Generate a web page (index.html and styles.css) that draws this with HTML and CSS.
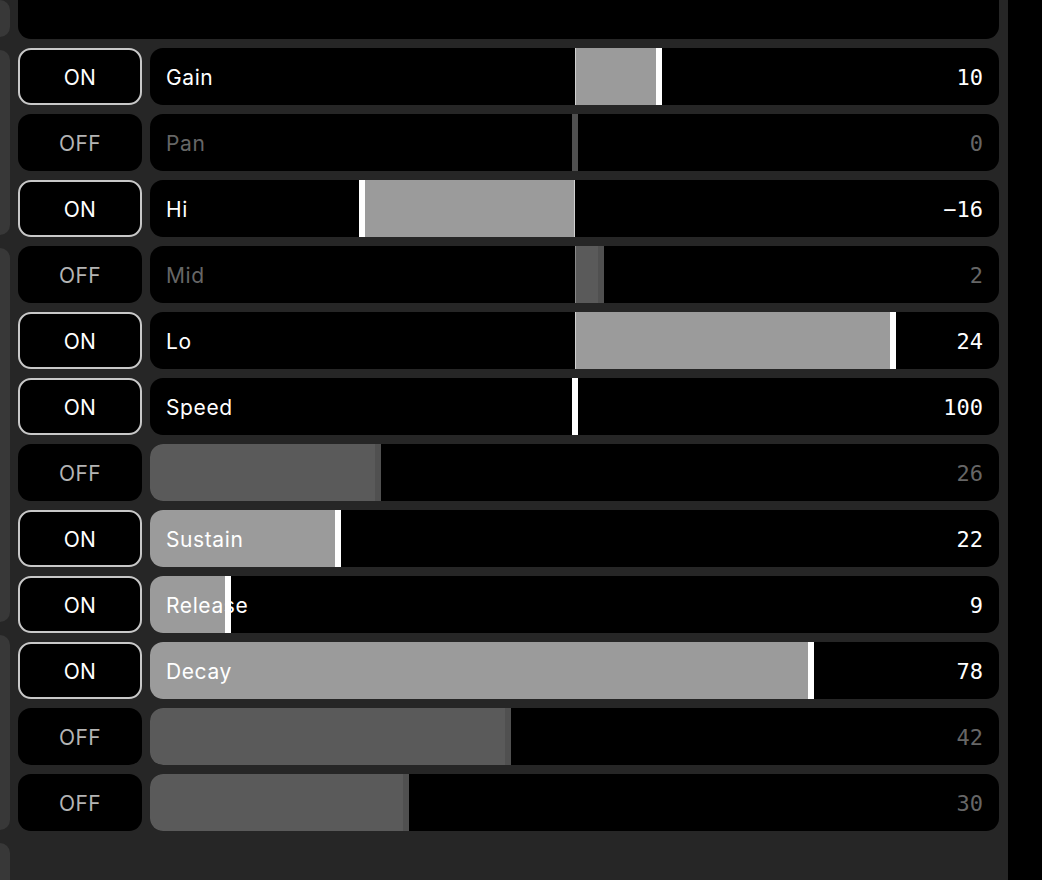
FILE: index.html
```html
<html>

<head>
    <link rel="stylesheet" href="styles.css">
</head>

<body>
    <div class="app">
        <div class="side">
            <div class="card c1"></div>
            <div class="card c2"></div>
            <div class="card c3"></div>
            <div class="card c4"></div>
            <div class="card c5"></div>
        </div>

        <div class="main">
            <div class="top"></div>

            <div class="row">
                <button class="toggle on">ON</button>
                <div class="track">
                    <div class="fill pos" style="left: 50%; width: 10%"></div>
                    <span class="label">Gain</span>
                    <span class="value">10</span>
                    <div class="knob" style="left: calc(60% - 3px)"></div>
                </div>
            </div>

            <div class="row">
                <button class="toggle">OFF</button>
                <div class="track off">
                    <span class="label">Pan</span>
                    <span class="value">0</span>
                    <div class="knob" style="left: calc(50% - 3px)"></div>
                </div>
            </div>

            <div class="row">
                <button class="toggle on">ON</button>
                <div class="track">
                    <div class="fill neg" style="left: 25%; width: 25%"></div>
                    <span class="label">Hi</span>
                    <span class="value">−16</span>
                    <div class="knob" style="left: calc(25% - 3px)"></div>
                </div>
            </div>

            <div class="row">
                <button class="toggle">OFF</button>
                <div class="track off">
                    <div class="fill pos" style="left: 50%; width: 3.125%"></div>
                    <span class="label">Mid</span>
                    <span class="value">2</span>
                    <div class="knob" style="left: calc(53.125% - 3px)"></div>
                </div>
            </div>

            <div class="row">
                <button class="toggle on">ON</button>
                <div class="track">
                    <div class="fill pos" style="left: 50%; width: 37.5%"></div>
                    <span class="label">Lo</span>
                    <span class="value">24</span>
                    <div class="knob" style="left: calc(87.5% - 3px)"></div>
                </div>
            </div>

            <div class="row">
                <button class="toggle on">ON</button>
                <div class="track">
                    <span class="label">Speed</span>
                    <span class="value">100</span>
                    <div class="knob" style="left: calc(50% - 3px)"></div>
                </div>
            </div>

            <div class="row">
                <button class="toggle">OFF</button>
                <div class="track off">
                    <div class="fill" style="left: 0; width: 27.2%"></div>
                    <span class="label"></span>
                    <span class="value">26</span>
                    <div class="knob" style="left: calc(26.9% - 3px)"></div>
                </div>
            </div>

            <div class="row">
                <button class="toggle on">ON</button>
                <div class="track">
                    <div class="fill" style="left: 0; width: 22%"></div>
                    <span class="label">Sustain</span>
                    <span class="value">22</span>
                    <div class="knob" style="left: calc(22.2% - 3px)"></div>
                </div>
            </div>

            <div class="row">
                <button class="toggle on">ON</button>
                <div class="track">
                    <div class="fill" style="left: 0; width: 9%"></div>
                    <span class="label">Release</span>
                    <span class="value">9</span>
                    <div class="knob" style="left: calc(9.2% - 3px)"></div>
                </div>
            </div>

            <div class="row">
                <button class="toggle on">ON</button>
                <div class="track">
                    <div class="fill" style="left: 0; width: 78%"></div>
                    <span class="label">Decay</span>
                    <span class="value">78</span>
                    <div class="knob" style="left: calc(77.9% - 3px)"></div>
                </div>
            </div>

            <div class="row">
                <button class="toggle">OFF</button>
                <div class="track off">
                    <div class="fill" style="left: 0; width: 42.4%"></div>
                    <span class="label"></span>
                    <span class="value">42</span>
                    <div class="knob" style="left: calc(42.2% - 3px)"></div>
                </div>
            </div>

            <div class="row">
                <button class="toggle">OFF</button>
                <div class="track off">
                    <div class="fill" style="left: 0; width: 30.5%"></div>
                    <span class="label"></span>
                    <span class="value">30</span>
                    <div class="knob" style="left: calc(30.1% - 3px)"></div>
                </div>
            </div>
        </div>
    </div>
</body>

</html>
```

FILE: styles.css
```css
body {
    margin: 0;
    background: #000;
    font-family: Inter, "Noto Sans", sans-serif;
}

.app {
    display: flex;
    gap: 8px;
    width: 1008px;
    height: 880px;
    overflow: hidden;
    background: #262626;
}

.side {
    display: flex;
    flex-direction: column;
    gap: 13px;
    width: 10px;
    flex-shrink: 0;
}
.card {
    background: #383838;
    border-radius: 0 10px 10px 0;
    flex-shrink: 0;
}
.c1 { height: 37px; }
.c2 { height: 185px; }
.c3 { height: 374px; }
.c4 { height: 195px; }
.c5 { height: 60px; }

.main {
    flex: 1;
    display: flex;
    flex-direction: column;
    gap: 9px;
    padding-right: 9px;
}

.top {
    height: 39px;
    background: #000;
    border-radius: 0 0 13px 13px;
    flex-shrink: 0;
}

.row {
    display: flex;
    gap: 8px;
    height: 57px;
    flex-shrink: 0;
}

.toggle {
    width: 124px;
    height: 57px;
    box-sizing: border-box;
    border: 2px solid transparent;
    border-radius: 13px;
    background: #000;
    color: #b4b4b4;
    font-family: Inter, "Noto Sans", sans-serif;
    font-size: 21px;
    padding: 1px 0 0;
    letter-spacing: 0.4px;
}
.toggle.on {
    border-color: #c8c8c8;
    color: #fff;
}

.track {
    flex: 1;
    position: relative;
    display: flex;
    align-items: center;
    justify-content: space-between;
    padding: 1px 16px 0;
    background: #000;
    border-radius: 13px;
    overflow: hidden;
}

.label {
    position: relative;
    color: #fff;
    font-size: 21px;
    letter-spacing: 0.6px;
}
.value {
    position: relative;
    color: #fff;
    font-family: "DejaVu Sans Mono", "Liberation Mono", monospace;
    font-size: 22px;
}

.fill {
    position: absolute;
    top: 0;
    bottom: 0;
    background: #9b9b9b;
}
.fill.pos { box-shadow: inset 1px 0 0 #d0d0d0; }
.fill.neg { box-shadow: inset -1px 0 0 #d0d0d0; }

.knob {
    position: absolute;
    top: 0;
    bottom: 0;
    width: 6px;
    background: #fff;
}

.off .label,
.off .value {
    color: #666;
}
.off .fill {
    background: #5a5a5a;
}
.off .fill.pos { box-shadow: inset 1px 0 0 #888; }
.off .knob {
    background: #505050;
}
```
